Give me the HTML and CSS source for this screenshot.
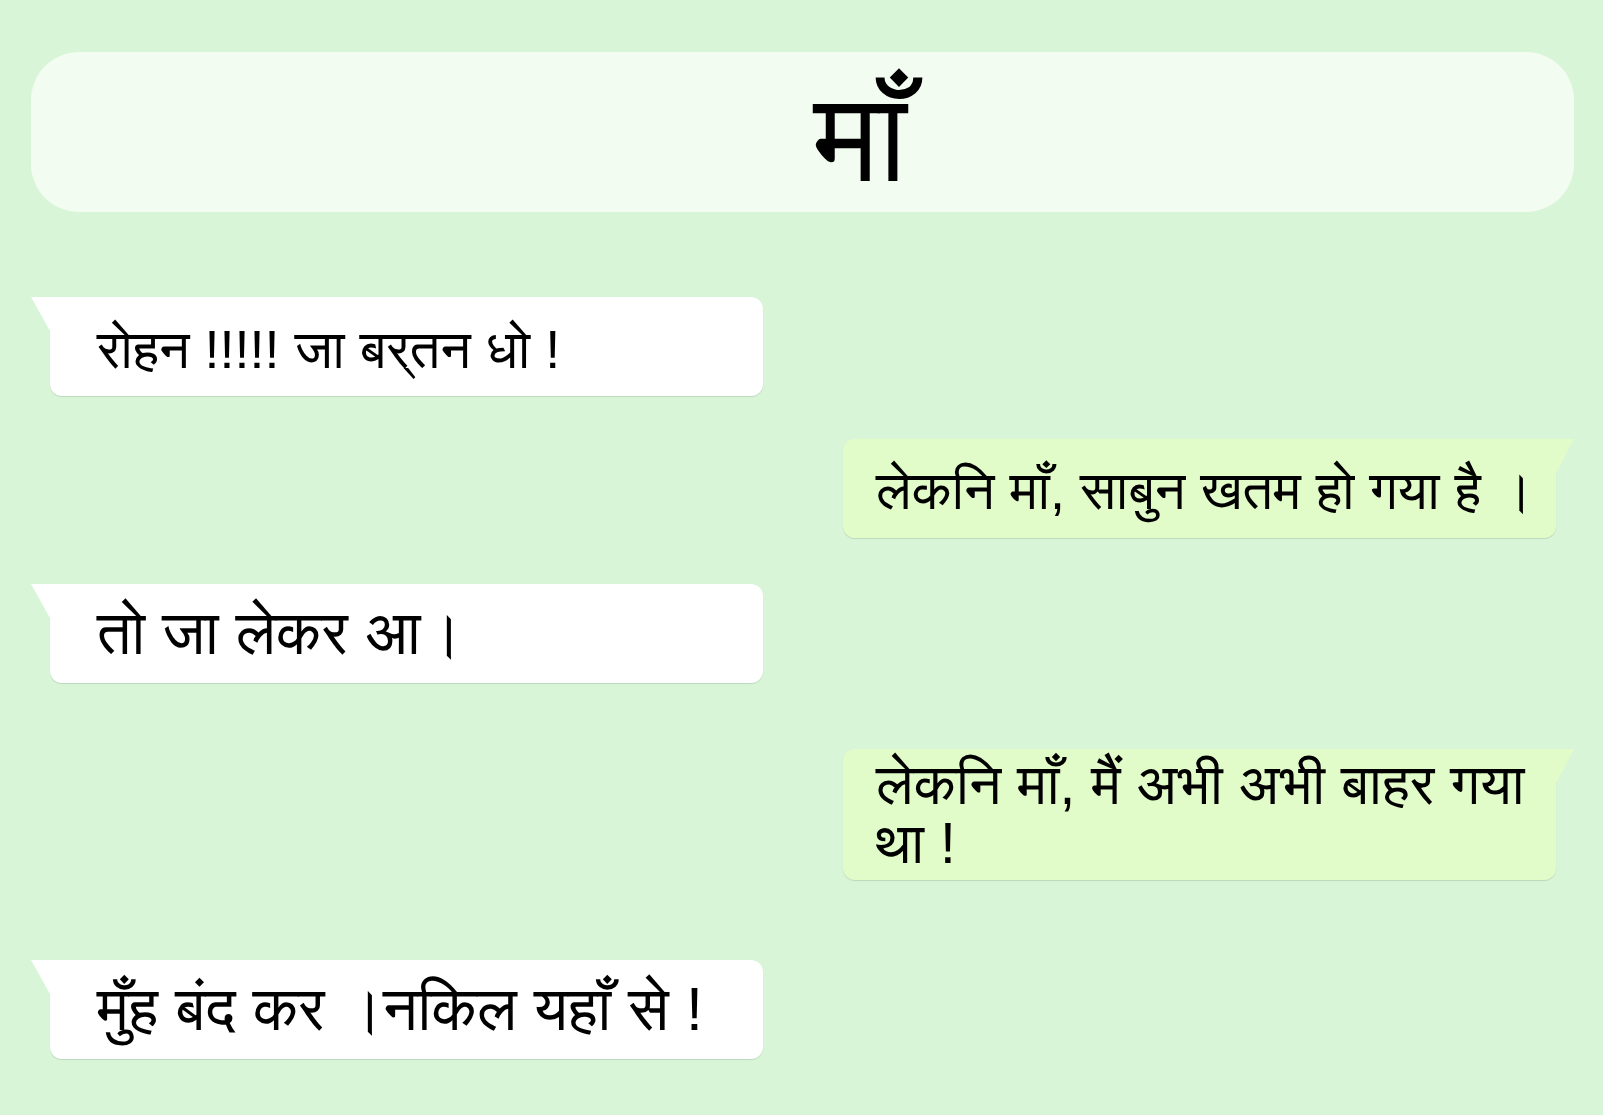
FILE: index.html
```html
<!DOCTYPE html>
<html lang="hi">
<head>
<meta charset="utf-8">
<title>माँ</title>
<link rel="stylesheet" href="styles.css">
</head>
<body>
<main class="chat">
  <header class="title"><h1 class="title-text">माँ</h1></header>
  <div class="msg in m1"><p class="msg-text">रोहन !!!!! जा बर्‌तन धो !</p></div>
  <div class="msg out m2"><p class="msg-text">लेकनि माँ, साबुन खतम हो गया है ।</p></div>
  <div class="msg in m3"><p class="msg-text">तो जा लेकर आ।</p></div>
  <div class="msg out m4"><p class="msg-text">लेकनि माँ, मैं अभी अभी बाहर गया था !</p></div>
  <div class="msg in m5"><p class="msg-text">मुँह बंद कर ।नकिल यहाँ से !</p></div>
</main>
</body>
</html>
```

FILE: styles.css
```css
html, body {
  margin: 0;
  padding: 0;
  background: #d8f5d8;
}

body {
  font-family: "Liberation Sans", "FreeSans", sans-serif;
  color: #000;
}

.chat {
  display: flex;
  flex-direction: column;
  padding: 52px 29px 0 31px;
  min-height: 1115px;
  box-sizing: border-box;
}

.title {
  box-sizing: border-box;
  height: 160px;
  background: #f3fcf1;
  border-radius: 48px;
  display: flex;
  align-items: center;
  justify-content: center;
  padding: 10px 0 0 116px;
}

.title-text {
  margin: 0;
  font-size: 125px;
  font-weight: normal;
  line-height: 1;
}

.msg {
  position: relative;
  width: 713px;
  box-sizing: border-box;
  border-radius: 0 12px 12px 12px;
  box-shadow: 0 1px 1px rgba(0, 0, 0, 0.12);
}

.msg-text {
  margin: 0;
  font-size: 54px;
  line-height: 62px;
}

.msg::before {
  content: "";
  position: absolute;
  top: 0;
  width: 19px;
  height: 34px;
}

.in {
  background: #ffffff;
  margin-left: 19px;
  padding: 21px 30px 16px 47px;
}

.in::before {
  left: -19px;
  background: #ffffff;
  clip-path: polygon(0 0, 100% 0, 100% 100%);
}

.out {
  background: #e2fcc9;
  align-self: flex-end;
  margin-right: 18px;
  border-radius: 12px 0 12px 12px;
  padding: 20px 18px 17px 33px;
}

.out::before {
  right: -18px;
  width: 18px;
  background: #e2fcc9;
  clip-path: polygon(0 0, 100% 0, 0 100%);
}

.m1 { margin-top: 85px; }
.m2 { margin-top: 43px; }
.m3 { margin-top: 46px; padding-top: 18px; padding-bottom: 19px; }
.m4 { margin-top: 66px; padding-top: 6px; padding-bottom: 7px; }
.m5 { margin-top: 80px; padding-top: 18px; padding-bottom: 19px; }

.m3 .msg-text,
.m5 .msg-text { font-size: 61px; }

.m4 .msg-text { font-size: 57px; line-height: 59px; }
```
